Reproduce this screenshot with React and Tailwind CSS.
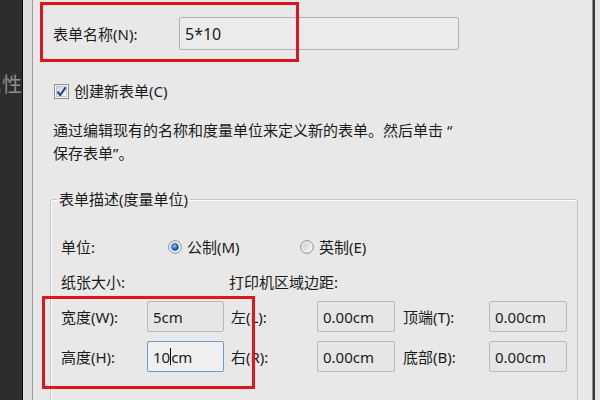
import React from "react";

function Checkbox() {
  return (
    <svg width="15" height="15" viewBox="0 0 15 15" className="shrink-0">
      <defs>
        <linearGradient id="cbg" x1="0" y1="0" x2="1" y2="1">
          <stop offset="0" stopColor="#cfd3d8" />
          <stop offset="1" stopColor="#f7f8f9" />
        </linearGradient>
      </defs>
      <rect x="0.5" y="0.5" width="14" height="14" fill="#f4f4f4" stroke="#8e8f8f" />
      <rect x="2.5" y="2.5" width="10" height="10" fill="url(#cbg)" stroke="#b8bcc2" strokeWidth="0.8" />
      <path d="M3.6 7.6 L6.2 11.2 L11.6 3.4" fill="none" stroke="#243f8e" strokeWidth="2" strokeLinejoin="round" />
    </svg>
  );
}

function Radio({ checked }) {
  return (
    <svg width="14" height="14" viewBox="0 0 14 14" className="shrink-0">
      <defs>
        <linearGradient id="rbg" x1="0" y1="0" x2="1" y2="1">
          <stop offset="0" stopColor="#c9ccd1" />
          <stop offset="1" stopColor="#f6f6f6" />
        </linearGradient>
        <radialGradient id="rdot" cx="0.4" cy="0.35" r="0.7">
          <stop offset="0" stopColor="#9fd2ff" />
          <stop offset="0.5" stopColor="#2f7fd4" />
          <stop offset="1" stopColor="#0d3f7d" />
        </radialGradient>
      </defs>
      <circle cx="7" cy="7" r="6.3" fill="#f2f2f2" stroke="#8a8c8e" strokeWidth="1" />
      <circle cx="7" cy="7" r="4.6" fill="url(#rbg)" />
      {checked && <circle cx="7" cy="7" r="3.4" fill="url(#rdot)" stroke="#1d4a82" strokeWidth="0.6" />}
    </svg>
  );
}

function Field({ children, w, focus }) {
  return (
    <div
      className={
        focus
          ? "h-[31px] flex items-center pl-[5px] rounded-[2px] border border-[#6f9bcc] bg-[#efefef] shrink-0"
          : "h-[31px] flex items-center pl-[5px] rounded-[2px] border border-[#b9b9b9] bg-[#e6e6e6] shrink-0"
      }
      style={{ width: w }}
    >
      {children}
    </div>
  );
}

export default function App() {
  return (
    <div className="relative w-[600px] h-[400px] overflow-hidden flex bg-[#e8e8e8] font-['Noto_Sans','Noto_Sans_CJK_SC',sans-serif] text-[15px] leading-[22px] text-[#1b1b1b]">
      {/* left dark panel */}
      <div className="w-[22px] bg-[#2d2d2d] flex justify-end overflow-hidden pt-[72px] shrink-0">
        <span className="text-[20px] leading-[26px] text-[#8d8d8d] whitespace-nowrap h-[26px]">属性</span>
      </div>
      <div className="w-px bg-[#111111] shrink-0" />
      <div className="w-[9px] bg-[#dddddd] shrink-0" />
      <div className="w-px bg-[#9c9c9c] shrink-0" />

      {/* main dialog */}
      <div className="flex-1 pl-[17px] flex flex-col">
        <div className="pl-[3px]">
          <div className="flex items-center h-[33px] mt-[17px]">
            <span className="w-[126px] shrink-0">表单名称(N):</span>
            <div className="w-[280px] h-[33px] flex items-center pl-[5px] rounded-[2px] border border-[#b3b3b3] bg-[#ebebeb] text-[16px]">
              5*10
            </div>
          </div>

          <div className="flex items-center h-[16px] mt-[33px] pl-[1px]">
            <Checkbox />
            <span className="ml-[5px]">创建新表单(C)</span>
          </div>

          <p className="mt-[20px] leading-[23px]">
            通过编辑现有的名称和度量单位来定义新的表单。然后单击 “
            <br />
            保存表单”。
          </p>
        </div>

        <fieldset className="mt-[23px] w-[525px] border border-[#c6c6c6] rounded-[3px] px-[10px] pb-[40px] shadow-[inset_1px_1px_0_#ffffff]">
          <legend className="ml-[-4px] px-[2px]">表单描述(度量单位)</legend>

          <div className="flex items-center h-[22px] mt-[26px]">
            <span className="w-[107px] shrink-0">单位:</span>
            <div className="w-[132px] flex items-center shrink-0">
              <Radio checked />
              <span className="ml-[5px]">公制(M)</span>
            </div>
            <div className="flex items-center">
              <Radio />
              <span className="ml-[5px]">英制(E)</span>
            </div>
          </div>

          <div className="flex items-center h-[22px] mt-[13px]">
            <span className="w-[168px] shrink-0">纸张大小:</span>
            <span>打印机区域边距:</span>
          </div>

          <div className="flex items-center mt-[8px]">
            <span className="w-[86px] shrink-0">宽度(W):</span>
            <Field w={77}>5cm</Field>
            <span className="w-[86px] ml-[7px] shrink-0">左(L):</span>
            <Field w={78}>0.00cm</Field>
            <span className="w-[86px] ml-[8px] shrink-0">顶端(T):</span>
            <Field w={78}>0.00cm</Field>
          </div>

          <div className="flex items-center mt-[9px]">
            <span className="w-[86px] shrink-0">高度(H):</span>
            <Field w={77} focus>
              10
              <span className="inline-block w-px h-[17px] bg-black" />
              cm
            </Field>
            <span className="w-[86px] ml-[7px] shrink-0">右(R):</span>
            <Field w={78}>0.00cm</Field>
            <span className="w-[86px] ml-[8px] shrink-0">底部(B):</span>
            <Field w={78}>0.00cm</Field>
          </div>
        </fieldset>
      </div>

      {/* right edge */}
      <div className="w-px bg-[#8a8a8a] shrink-0" />
      <div className="w-[2px] bg-[#3a3a3a] shrink-0" />
      <div className="w-[5px] bg-[#e4e4e4] shrink-0" />

      {/* red annotation boxes */}
      <div className="absolute left-[40px] top-[2px] w-[259px] h-[60px] border-[3px] border-[#e0161e] pointer-events-none" />
      <div className="absolute left-[42px] top-[296px] w-[213px] h-[93px] border-[3px] border-[#e0161e] pointer-events-none" />
    </div>
  );
}
